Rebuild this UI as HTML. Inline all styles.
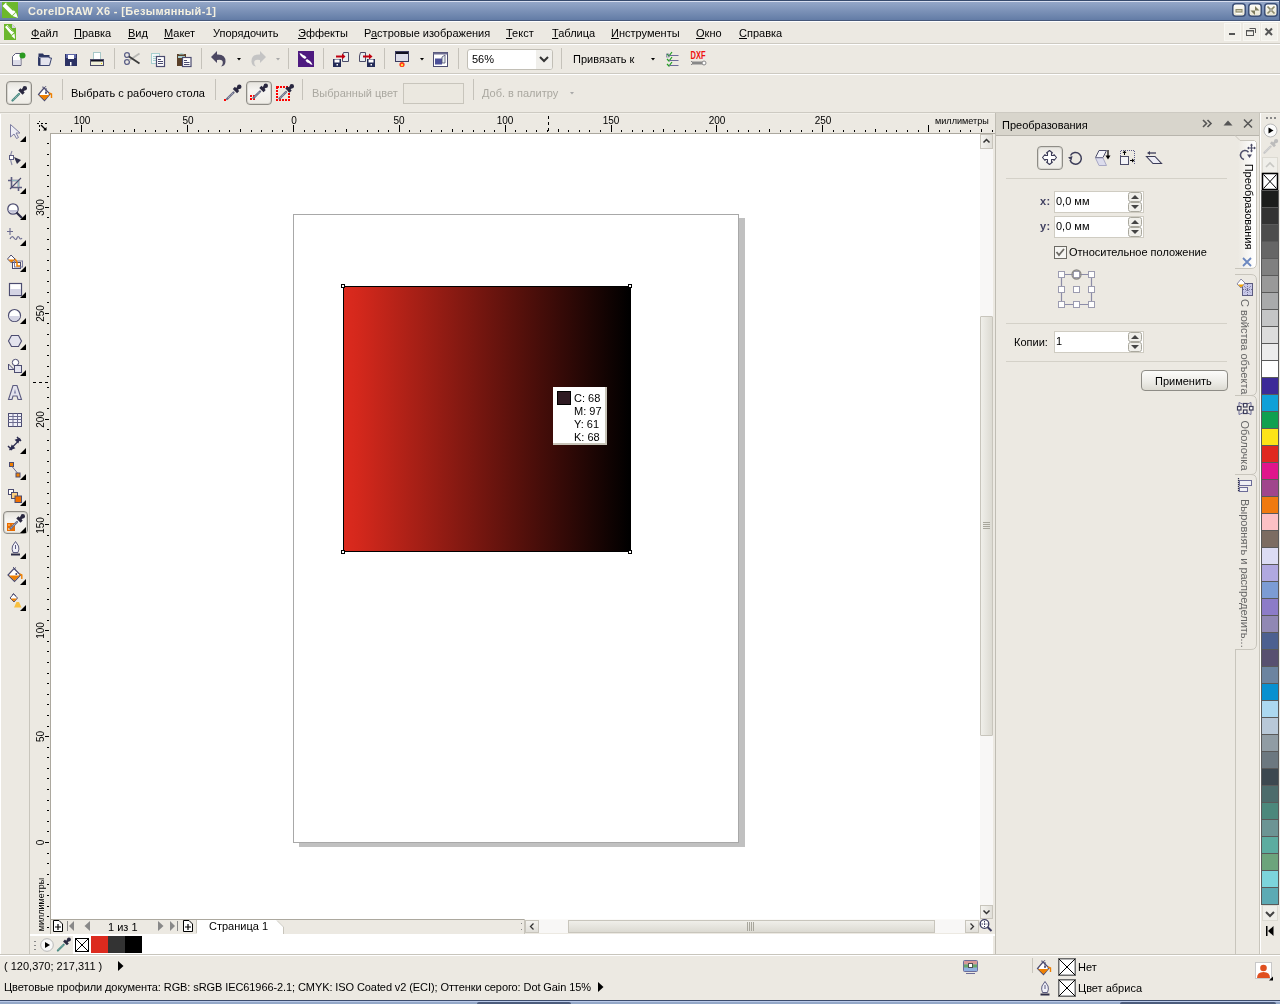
<!DOCTYPE html><html><head><meta charset="utf-8"><style>
*{box-sizing:border-box}
html,body{margin:0;padding:0;width:1280px;height:1004px;overflow:hidden;background:#ECE9E2;font-family:"Liberation Sans",sans-serif;font-size:11px;color:#000}
.a{position:absolute}
.t{position:absolute;white-space:nowrap;line-height:13px;will-change:transform}
svg{position:absolute;overflow:visible}
.g{color:#a8a69c}
</style></head><body>
<div class="a" style="left:0px;top:0px;width:1280px;height:21px;background:linear-gradient(#364a6c 0,#364a6c 1px,#d8dff0 1px,#d8dff0 2px,#94a7c8 2px,#637ca6 20px,#46587a 20px)"></div>
<div class="a" style="left:0px;top:21px;width:1280px;height:1px;background:#fff"></div>
<svg style="left:2px;top:2px" width="16" height="16" viewBox="0 0 16 16"><rect x="0" y="0" width="16" height="16" fill="#6cb82c"/><path d="M0.5 4 L4 0.5 L13.5 10 L10 13.5 Z" fill="#fff"/><path d="M4.5 1.5 L11.5 8.5" stroke="#6cb82c" stroke-width="1.2"/><path d="M10.5 14 L14 10.5 L16 16 Z" fill="#fff"/></svg>
<div class="t" style="left:28px;top:5px;font-weight:bold;font-size:11px;letter-spacing:0.35px;color:#f4f0e0;line-height:13px">CorelDRAW X6 - [Безымянный-1]</div>
<div class="a" style="left:1279px;top:0px;width:1px;height:21px;background:#3c5078"></div>
<svg style="left:1232px;top:3px" width="14" height="14" viewBox="0 0 14 14"><defs><linearGradient id="tb" x1="0" y1="0" x2="0" y2="1"><stop offset="0" stop-color="#fefefa"/><stop offset="1" stop-color="#e8e4d0"/></linearGradient></defs><rect x="0.75" y="0.75" width="12.5" height="12.5" rx="3" fill="url(#tb)" stroke="#3c5078" stroke-width="1.5"/><rect x="4" y="6.5" width="6" height="2.5" fill="#d0ccb4" stroke="#8c8a6c"/><path d="M4 10.5 H10" stroke="#fff"/></svg>
<svg style="left:1248px;top:3px" width="14" height="14" viewBox="0 0 14 14"><defs><linearGradient id="tb" x1="0" y1="0" x2="0" y2="1"><stop offset="0" stop-color="#fefefa"/><stop offset="1" stop-color="#e8e4d0"/></linearGradient></defs><rect x="0.75" y="0.75" width="12.5" height="12.5" rx="3" fill="url(#tb)" stroke="#3c5078" stroke-width="1.5"/><path d="M7 3 L7 7.5 L11.5 7.5 Z M2.5 7.5 L7 7.5 L7 12 Z" fill="#7c7a5c"/></svg>
<svg style="left:1264px;top:3px" width="14" height="14" viewBox="0 0 14 14"><defs><linearGradient id="tb" x1="0" y1="0" x2="0" y2="1"><stop offset="0" stop-color="#fefefa"/><stop offset="1" stop-color="#e8e4d0"/></linearGradient></defs><rect x="0.75" y="0.75" width="12.5" height="12.5" rx="3" fill="url(#tb)" stroke="#3c5078" stroke-width="1.5"/><path d="M3.5 3.5 L10.5 10.5 M10.5 3.5 L3.5 10.5" stroke="#8c8a6c" stroke-width="1.7"/><circle cx="7" cy="7" r="1.3" fill="#a8a8a0"/></svg>
<div class="a" style="left:0px;top:43px;width:1280px;height:1px;background:#cdcac2"></div>
<div class="a" style="left:0px;top:44px;width:1280px;height:1px;background:#fff"></div>
<div class="a" style="left:0px;top:73px;width:1280px;height:1px;background:#cdcac2"></div>
<div class="a" style="left:0px;top:74px;width:1280px;height:1px;background:#fff"></div>
<div class="a" style="left:0px;top:112px;width:1280px;height:1px;background:#cdcac2"></div>
<div class="a" style="left:0px;top:113px;width:1280px;height:1px;background:#f2f0ea"></div>
<svg style="left:4px;top:24px" width="12" height="16" viewBox="0 0 12 16"><path d="M0 0 H8 L12 4 V16 H0 Z" fill="#6cb82c"/><path d="M8 0 L12 4 H8 Z" fill="#d8d0e8"/><path d="M1 3 L3.5 1 L10 8.5 L7.5 11 Z" fill="#fff"/><path d="M3.5 2 L8.5 7.5" stroke="#6cb82c" stroke-width="1"/><path d="M7.5 12 L10.5 9.5 L11 15 Z" fill="#fff"/></svg>
<div class="t" style="left:31px;top:27px;"><u>Ф</u>айл</div>
<div class="t" style="left:74px;top:27px;"><u>П</u>равка</div>
<div class="t" style="left:128px;top:27px;"><u>В</u>ид</div>
<div class="t" style="left:164px;top:27px;"><u>М</u>акет</div>
<div class="t" style="left:213px;top:27px;">Упоря<u>д</u>очить</div>
<div class="t" style="left:298px;top:27px;"><u>Э</u>ффекты</div>
<div class="t" style="left:364px;top:27px;">Р<u>а</u>стровые изображения</div>
<div class="t" style="left:506px;top:27px;"><u>Т</u>екст</div>
<div class="t" style="left:552px;top:27px;"><u>Т</u>аблица</div>
<div class="t" style="left:611px;top:27px;"><u>И</u>нструменты</div>
<div class="t" style="left:696px;top:27px;"><u>О</u>кно</div>
<div class="t" style="left:739px;top:27px;"><u>С</u>правка</div>
<svg style="left:1224px;top:23px" width="17" height="18" viewBox="0 0 17 18"><rect x="0.5" y="0.5" width="16" height="17" fill="#f2f0ea" stroke="#f8f7f2"/><rect x="5" y="10" width="6" height="2" fill="#555"/></svg>
<svg style="left:1243px;top:23px" width="17" height="18" viewBox="0 0 17 18"><rect x="0.5" y="0.5" width="16" height="17" fill="#f2f0ea" stroke="#f8f7f2"/><rect x="3.5" y="7.5" width="7" height="5" fill="none" stroke="#555"/><path d="M6.5 5.5 L12.5 5.5 L12.5 10" fill="none" stroke="#555"/><rect x="3" y="7" width="8" height="1.5" fill="#555"/></svg>
<svg style="left:1261px;top:23px" width="17" height="18" viewBox="0 0 17 18"><rect x="0.5" y="0.5" width="16" height="17" fill="#f2f0ea" stroke="#f8f7f2"/><path d="M4.5 5.5 L11 12 M11 5.5 L4.5 12" stroke="#555" stroke-width="2"/></svg>
<div class="a" style="left:114px;top:48px;width:1px;height:21px;background:#c5c2ba"></div>
<div class="a" style="left:201px;top:48px;width:1px;height:21px;background:#c5c2ba"></div>
<div class="a" style="left:288px;top:48px;width:1px;height:21px;background:#c5c2ba"></div>
<div class="a" style="left:323px;top:48px;width:1px;height:21px;background:#c5c2ba"></div>
<div class="a" style="left:384px;top:48px;width:1px;height:21px;background:#c5c2ba"></div>
<div class="a" style="left:458px;top:48px;width:1px;height:21px;background:#c5c2ba"></div>
<div class="a" style="left:561px;top:48px;width:1px;height:21px;background:#c5c2ba"></div>
<svg style="left:12px;top:52px" width="14" height="14" viewBox="0 0 14 14"><path d="M3.5 1.5 L9 1.5 L9 13.5 L0.5 13.5 L0.5 4.5 Z" fill="#fff" stroke="#5c5c78"/><rect x="1" y="8" width="7.5" height="5" fill="#dcdce8"/><circle cx="10.5" cy="3.5" r="3" fill="#2a9a20"/></svg>
<svg style="left:38px;top:53px" width="14" height="13" viewBox="0 0 14 13"><path d="M0.5 0.5 L5 0.5 L6 2 L11.5 2 L11.5 5 L0.5 5 Z" fill="#2a3460"/><path d="M0.5 4 L11 4 L11.5 5 L13.5 5 L11.5 12.5 L0.5 12.5 Z" fill="#e4e4ee" stroke="#3a4470"/><rect x="0.5" y="5" width="2" height="7" fill="#2a3460"/></svg>
<svg style="left:65px;top:54px" width="12" height="12" viewBox="0 0 12 12"><rect x="0" y="0" width="12" height="12" fill="#2c3264"/><rect x="1" y="0" width="10" height="4" fill="#6068a8"/><rect x="3" y="1" width="6" height="4" fill="#fff"/><rect x="5" y="8" width="1.5" height="3.5" fill="#fff"/></svg>
<svg style="left:90px;top:52px" width="14" height="14" viewBox="0 0 14 14"><rect x="3.5" y="0.5" width="7" height="7" fill="#fff" stroke="#a8c8c8"/><rect x="0.5" y="7.5" width="13" height="6" fill="#f0f0d8" stroke="#4c4c68"/><rect x="1" y="8" width="12" height="1.5" fill="#101020"/><rect x="11" y="11" width="1" height="1" fill="#e0c000"/></svg>
<svg style="left:124px;top:52px" width="16" height="13" viewBox="0 0 16 13"><circle cx="3" cy="3" r="2.4" fill="none" stroke="#5c6088" stroke-width="1.3"/><circle cx="3" cy="10" r="2.4" fill="none" stroke="#5c6088" stroke-width="1.3"/><path d="M5 8.5 L15.5 1.5" stroke="#b8b8b4" stroke-width="1.8"/><path d="M5 4.5 L15.5 11.5" stroke="#3c3c3c" stroke-width="1.8"/></svg>
<svg style="left:151px;top:53px" width="15" height="14" viewBox="0 0 15 14"><rect x="0.5" y="0.5" width="8" height="10" fill="#f4f8f8" stroke="#a8d0d0"/><path d="M2 3.5 H6 M2 5.5 H5 M2 7.5 H5" stroke="#a8d0d0"/><rect x="5.5" y="3.5" width="8" height="10" fill="#fff" stroke="#4c4c70" stroke-width="1.2"/><path d="M7 6.5 H10 M7 8.5 H12 M7 10.5 H12" stroke="#4c4c70"/></svg>
<svg style="left:177px;top:52px" width="15" height="15" viewBox="0 0 15 15"><rect x="0" y="2" width="9" height="12" fill="#5a4028"/><path d="M1.5 2.5 Q4.5 -0.5 7.5 2.5" fill="#a8d0d0"/><rect x="1" y="4" width="7" height="2" fill="#a8d0d0"/><rect x="5.5" y="5.5" width="8.5" height="9" fill="#fff" stroke="#4c4c70" stroke-width="1.2"/><path d="M7 8.5 H10 M7 10.5 H12.5 M7 12.5 H12.5" stroke="#4c4c70"/></svg>
<svg style="left:211px;top:51px" width="16" height="16" viewBox="0 0 16 16"><path d="M0 6 L6 0 L6 3.5 Q15 3 14.5 11 Q14 15 10 15.5 Q12.5 13 11.5 10 Q10 8 6 9 L6 12 Z" fill="#4c4862"/></svg>
<svg style="left:237px;top:58px" width="4" height="3" viewBox="0 0 4 3"><path d="M0 0 H4 L2 2.5 Z" fill="#000"/></svg>
<svg style="left:250px;top:51px" width="16" height="16" viewBox="0 0 16 16"><path d="M16 6 L10 0 L10 3.5 Q1 3 1.5 11 Q2 15 6 15.5 Q3.5 13 4.5 10 Q6 8 10 9 L10 12 Z" fill="#c4c4c4"/></svg>
<svg style="left:276px;top:58px" width="4" height="3" viewBox="0 0 4 3"><path d="M0 0 H4 L2 2.5 Z" fill="#a8a8a8"/></svg>
<svg style="left:298px;top:51px" width="16" height="16" viewBox="0 0 16 16"><rect x="0" y="0" width="16" height="16" fill="#4e1a80"/><path d="M1.5 2 Q4 2.5 5 4 Q7 4 8.5 6.5 L7 8 Q5 7 3.5 5.5 Q2 4 1.5 2 Z M14.5 14 Q12 13.5 11 12 Q9 12 7.5 9.5 L9 8 Q11 9 12.5 10.5 Q14 12 14.5 14 Z" fill="#fff"/></svg>
<svg style="left:333px;top:52px" width="16" height="15" viewBox="0 0 16 15"><path d="M10.5 0.5 L15.5 0.5 L15.5 9.5 L9.5 9.5 L9.5 4 Z" fill="#e8eef0" stroke="#4c4c68"/><path d="M3 4.5 L10 4.5" stroke="#c00010" stroke-width="2"/><path d="M9 1.5 L12.5 4.5 L9 7.5 Z" fill="#c00010"/><rect x="0" y="7" width="8" height="8" fill="#242c58"/><rect x="1.5" y="7.5" width="5" height="3" fill="#fff"/><rect x="3.5" y="12" width="1.5" height="1.5" fill="#fff"/></svg>
<svg style="left:359px;top:52px" width="16" height="15" viewBox="0 0 16 15"><path d="M1.5 0.5 L6.5 0.5 L6.5 9.5 L0.5 9.5 L0.5 4 Z" fill="#e8eef0" stroke="#4c4c68"/><path d="M4 4.5 L11 4.5" stroke="#c00010" stroke-width="2"/><path d="M10 1.5 L13.5 4.5 L10 7.5 Z" fill="#c00010"/><rect x="8" y="7" width="8" height="8" fill="#242c58"/><rect x="9.5" y="7.5" width="5" height="3" fill="#fff"/><rect x="11.5" y="12" width="1.5" height="1.5" fill="#fff"/></svg>
<svg style="left:395px;top:51px" width="14" height="17" viewBox="0 0 14 17"><rect x="0.5" y="0.5" width="13" height="10" fill="#dcdce8" stroke="#3c3c60"/><rect x="1" y="1" width="12" height="2" fill="#101020"/><circle cx="7" cy="13.5" r="2.6" fill="#ff3818"/><circle cx="7" cy="14" r="1.2" fill="#ffe040"/></svg>
<svg style="left:420px;top:58px" width="4" height="3" viewBox="0 0 4 3"><path d="M0 0 H4 L2 2.5 Z" fill="#000"/></svg>
<svg style="left:433px;top:52px" width="15" height="15" viewBox="0 0 15 15"><rect x="0.5" y="0.5" width="14" height="14" fill="#fff" stroke="#4c4c70"/><rect x="0.5" y="0.5" width="14" height="2" fill="#6c6c90"/><rect x="2" y="6.5" width="7" height="6" fill="#4c5098"/><path d="M9 5 L12 3 L12 11 L9 11 Z" fill="#e8f0f0" stroke="#4c4c70" stroke-width="0.8"/></svg>
<div class="a" style="left:467px;top:49px;width:86px;height:21px;border:1px solid #c2bfb6;border-radius:3px;background:#fff"></div>
<div class="a" style="left:536px;top:50px;width:16px;height:19px;background:#f0efeb;border-radius:0 2px 2px 0"></div>
<svg style="left:539px;top:56px" width="10" height="7" viewBox="0 0 10 7"><path d="M1 1 L5 5 L9 1" fill="none" stroke="#333" stroke-width="2"/></svg>
<div class="t" style="left:472px;top:53px;">56%</div>
<div class="t" style="left:573px;top:53px;">Привязать к</div>
<svg style="left:651px;top:58px" width="4" height="3" viewBox="0 0 4 3"><path d="M0 0 H4 L2 2.5 Z" fill="#000"/></svg>
<svg style="left:666px;top:51px" width="13" height="16" viewBox="0 0 13 16"><path d="M1 3 L3 5 L6 1 M1 8 L3 10 L6 6 M1 13 L3 15 L6 11" fill="none" stroke="#20a020" stroke-width="1.2"/><path d="M3 4.5 H12.5 M3 9.5 H12.5 M3 14.5 H12.5" stroke="#6c6c98" stroke-width="1"/><rect x="0.5" y="3" width="2.5" height="3" fill="none" stroke="#6c6c98" stroke-width="0.6"/></svg>
<svg style="left:690px;top:51px" width="17" height="16" viewBox="0 0 17 16"><text x="0.5" y="8" font-family="Liberation Sans" font-weight="bold" font-size="10" fill="#ee1010" textLength="15" lengthAdjust="spacingAndGlyphs">DXF</text><rect x="2" y="10.5" width="12" height="3" fill="#888"/><circle cx="14" cy="12" r="2" fill="#fff" stroke="#888"/><path d="M1 10.5 L2 10.5 M1 13.5 L2 13.5" stroke="#888"/></svg>
<div class="a" style="left:6px;top:81px;width:26px;height:24px;border:1px solid #8e8c86;border-radius:4px;background:linear-gradient(#e6e4de,#f6f5f2 40%,#eeece6);box-shadow:inset 0 0 0 1px #d8d6d0"></div>
<svg style="left:11px;top:86px" width="16" height="16" viewBox="0 0 16 16"><path d="M1.5 14.5 L8 8" stroke="#4c8c84" stroke-width="2.3" stroke-linecap="round"/><path d="M2.5 13.5 L7.5 8.5" stroke="#d8e8e8" stroke-width="0.7" stroke-dasharray="1 1"/><path d="M9.4 2.3 L13.7 6.6 L11.6 8.7 L7.3 4.4 Z" fill="#2a2840"/><path d="M11 5 L13.5 2.5" stroke="#2a2840" stroke-width="2.6"/><circle cx="13.8" cy="2.2" r="2.2" fill="#2a2840"/></svg>
<svg style="left:37px;top:86px" width="16" height="16" viewBox="0 0 16 16"><path d="M7 2 L13 8 L7.5 14.5 L1.5 8.5 Z" fill="#fff" stroke="#4c4c70" stroke-width="1.2"/><path d="M2 9 L12.5 9 L7.5 14 Z" fill="#f08000"/><path d="M5 1 L8 1.5 L9 0" stroke="#4c4c70" stroke-width="0.8" fill="none"/><path d="M12 7 L14.5 8 L14.5 12" fill="none" stroke="#f08000" stroke-width="1.4"/><circle cx="9" cy="7" r="1" fill="#4c4c70"/><path d="M9 7 L9 2" stroke="#4c4c70"/></svg>
<div class="a" style="left:62px;top:79px;width:1px;height:21px;background:#c5c2ba"></div>
<div class="t" style="left:71px;top:87px;">Выбрать с рабочего стола</div>
<div class="a" style="left:215px;top:79px;width:1px;height:21px;background:#c5c2ba"></div>
<svg style="left:224px;top:84px" width="17" height="17" viewBox="0 0 17 17"><rect x="0" y="15" width="2" height="2" fill="#f00"/><g transform="translate(1.5,0.5)"><path d="M1.5 14.5 L8 8" stroke="#6c7088" stroke-width="2.3" stroke-linecap="round"/><path d="M2.5 13.5 L7.5 8.5" stroke="#e0e0f0" stroke-width="0.7" stroke-dasharray="1 1"/><path d="M9.4 2.3 L13.7 6.6 L11.6 8.7 L7.3 4.4 Z" fill="#2a2840"/><path d="M11 5 L13.5 2.5" stroke="#2a2840" stroke-width="2.6"/><circle cx="13.8" cy="2.2" r="2.2" fill="#2a2840"/></g></svg>
<div class="a" style="left:246px;top:81px;width:26px;height:24px;border:1px solid #8e8c86;border-radius:4px;background:linear-gradient(#e6e4de,#f6f5f2 40%,#eeece6);box-shadow:inset 0 0 0 1px #d8d6d0"></div>
<svg style="left:250px;top:84px" width="17" height="17" viewBox="0 0 17 17"><rect x="0" y="11" width="2" height="2" fill="#f00"/><rect x="3" y="11" width="2" height="2" fill="#f00"/><rect x="0" y="14" width="2" height="2" fill="#f00"/><rect x="3" y="14" width="2" height="2" fill="#f00"/><g transform="translate(2,-0.5)"><path d="M1.5 14.5 L8 8" stroke="#6c7088" stroke-width="2.3" stroke-linecap="round"/><path d="M2.5 13.5 L7.5 8.5" stroke="#e0e0f0" stroke-width="0.7" stroke-dasharray="1 1"/><path d="M9.4 2.3 L13.7 6.6 L11.6 8.7 L7.3 4.4 Z" fill="#2a2840"/><path d="M11 5 L13.5 2.5" stroke="#2a2840" stroke-width="2.6"/><circle cx="13.8" cy="2.2" r="2.2" fill="#2a2840"/></g></svg>
<svg style="left:276px;top:86px" width="17" height="16" viewBox="0 0 17 16"><path d="M1 1 H13 V14 H1 Z" fill="none" stroke="#f00" stroke-width="2" stroke-dasharray="2 1"/><g transform="translate(2,-2)"><path d="M1.5 14.5 L8 8" stroke="#6c7088" stroke-width="2.3" stroke-linecap="round"/><path d="M2.5 13.5 L7.5 8.5" stroke="#e0e0f0" stroke-width="0.7" stroke-dasharray="1 1"/><path d="M9.4 2.3 L13.7 6.6 L11.6 8.7 L7.3 4.4 Z" fill="#2a2840"/><path d="M11 5 L13.5 2.5" stroke="#2a2840" stroke-width="2.6"/><circle cx="13.8" cy="2.2" r="2.2" fill="#2a2840"/></g></svg>
<div class="a" style="left:302px;top:79px;width:1px;height:21px;background:#c5c2ba"></div>
<div class="t" style="left:312px;top:87px;color:#aaa8a0">Выбранный цвет</div>
<div class="a" style="left:403px;top:83px;width:61px;height:21px;border:1px solid #c8c5bc;background:#ebe8e0"></div>
<div class="a" style="left:473px;top:79px;width:1px;height:21px;background:#c5c2ba"></div>
<div class="t" style="left:482px;top:87px;color:#aaa8a0">Доб. в палитру</div>
<svg style="left:570px;top:92px" width="4" height="3" viewBox="0 0 4 3"><path d="M0 0 H4 L2 2.5 Z" fill="#a8a8a8"/></svg>
<div class="a" style="left:0px;top:114px;width:1px;height:841px;background:#fff"></div>
<div class="a" style="left:29px;top:114px;width:1px;height:841px;background:#c8c5bc"></div>
<svg style="left:10px;top:124px" width="11" height="15" viewBox="0 0 11 15"><path d="M0.5 0.5 L10 9 L6 9 L8.5 13.5 L6.5 14.5 L4 10 L0.5 13 Z" fill="#eeeef4" stroke="#7c7ca0"/></svg>
<svg style="left:20px;top:136px" width="6" height="6" viewBox="0 0 6 6"><path d="M6 0 L6 6 L0 6 Z" fill="#000"/></svg>
<svg style="left:8px;top:150px" width="14" height="16" viewBox="0 0 14 16"><path d="M4 1 Q1 7 4 15" fill="none" stroke="#8c8ca8" stroke-width="1.2"/><rect x="1.5" y="5.5" width="4" height="4" fill="#fff" stroke="#5c5c80"/><path d="M6 7 L13 10 L9 14 Z" fill="#2c2c48"/></svg>
<svg style="left:20px;top:162px" width="6" height="6" viewBox="0 0 6 6"><path d="M6 0 L6 6 L0 6 Z" fill="#000"/></svg>
<svg style="left:8px;top:177px" width="14" height="14" viewBox="0 0 14 14"><path d="M3.5 0 V10.5 H14" fill="none" stroke="#5c5c80" stroke-width="1.6"/><path d="M0 3.5 H10.5 V14" fill="none" stroke="#5c5c80" stroke-width="1.6"/><path d="M4 3.5 H10 M10.5 4 V10" stroke="#9cd0d0" stroke-width="0.8"/><path d="M2 12 L13 1" stroke="#4c4c70" stroke-width="1.1"/></svg>
<svg style="left:20px;top:188px" width="6" height="6" viewBox="0 0 6 6"><path d="M6 0 L6 6 L0 6 Z" fill="#000"/></svg>
<svg style="left:7px;top:203px" width="16" height="17" viewBox="0 0 16 17"><circle cx="6" cy="6" r="5.2" fill="#fff" stroke="#4c4c70" stroke-width="1.3"/><path d="M1.5 7 H10.5 V8 Q6 12 1.5 8 Z" fill="#c4c4d8"/><path d="M9.5 9.5 L15 15" stroke="#2c2c48" stroke-width="2.2"/></svg>
<svg style="left:20px;top:214px" width="6" height="6" viewBox="0 0 6 6"><path d="M6 0 L6 6 L0 6 Z" fill="#000"/></svg>
<svg style="left:7px;top:228px" width="16" height="15" viewBox="0 0 16 15"><path d="M3 0 V7 M0 3.5 H6" stroke="#6c6c90" stroke-width="1.1"/><path d="M3 11 Q5 7 7 10 Q9 13 10 10 Q11 7 12.5 10 Q13.5 12 15 10" fill="none" stroke="#6c6c90" stroke-width="1.2"/></svg>
<svg style="left:20px;top:240px" width="6" height="6" viewBox="0 0 6 6"><path d="M6 0 L6 6 L0 6 Z" fill="#000"/></svg>
<svg style="left:7px;top:254px" width="16" height="16" viewBox="0 0 16 16"><path d="M4 1 L8 5 L4.5 9 L0.5 5 Z" fill="#fff" stroke="#4c4c70"/><path d="M1 5.5 L7.5 5.5 L4.5 8.5 Z" fill="#f08000"/><rect x="5.5" y="8.5" width="8" height="6" fill="#fff" stroke="#4c4c70"/><rect x="7.5" y="7" width="8" height="6" fill="none" stroke="#7c7ca0"/><path d="M8 5 L10 8 L10 12 L13 12" fill="none" stroke="#f08000" stroke-width="1.5"/></svg>
<svg style="left:20px;top:266px" width="6" height="6" viewBox="0 0 6 6"><path d="M6 0 L6 6 L0 6 Z" fill="#000"/></svg>
<svg style="left:9px;top:283px" width="13" height="13" viewBox="0 0 13 13"><rect x="0.5" y="0.5" width="12" height="12" fill="#fff" stroke="#4c4c70" stroke-width="1.2"/><rect x="1" y="6" width="11" height="6" fill="#d4d4e4"/></svg>
<svg style="left:20px;top:292px" width="6" height="6" viewBox="0 0 6 6"><path d="M6 0 L6 6 L0 6 Z" fill="#000"/></svg>
<svg style="left:8px;top:309px" width="13" height="13" viewBox="0 0 13 13"><circle cx="6.5" cy="6.5" r="6" fill="#fff" stroke="#4c4c70" stroke-width="1.2"/><path d="M0.8 7 H12.2 Q11 12 6.5 12.2 Q2 12 0.8 7 Z" fill="#d4d4e4"/></svg>
<svg style="left:20px;top:318px" width="6" height="6" viewBox="0 0 6 6"><path d="M6 0 L6 6 L0 6 Z" fill="#000"/></svg>
<svg style="left:8px;top:335px" width="14" height="12" viewBox="0 0 14 12"><path d="M3.5 0.5 H10.5 L13.5 6 L10.5 11.5 H3.5 L0.5 6 Z" fill="#e4e4ee" stroke="#4c4c70" stroke-width="1.1"/></svg>
<svg style="left:20px;top:344px" width="6" height="6" viewBox="0 0 6 6"><path d="M6 0 L6 6 L0 6 Z" fill="#000"/></svg>
<svg style="left:8px;top:359px" width="14" height="14" viewBox="0 0 14 14"><circle cx="7.5" cy="3.5" r="3.2" fill="#fff" stroke="#4c4c70"/><path d="M0.5 5 L0.5 10.5 L6 10.5 Z" fill="#e4e4ee" stroke="#4c4c70"/><rect x="6.5" y="6.5" width="7" height="7" fill="#e4e4ee" stroke="#4c4c70"/></svg>
<svg style="left:20px;top:370px" width="6" height="6" viewBox="0 0 6 6"><path d="M6 0 L6 6 L0 6 Z" fill="#000"/></svg>
<svg style="left:8px;top:385px" width="14" height="15" viewBox="0 0 14 15"><path d="M5 0.5 H9 L13.5 14.5 H10 L9 11 H5 L4 14.5 H0.5 Z" fill="#e4e4ee" stroke="#5c5c80" stroke-width="1.1"/><path d="M5.8 8.5 H8.2 L7 4 Z" fill="#8c8cb0"/></svg>
<svg style="left:8px;top:413px" width="14" height="14" viewBox="0 0 14 14"><rect x="0.5" y="0.5" width="13" height="13" fill="#f0f0f8" stroke="#4c4c70"/><path d="M0.5 3.5 H13.5 M0.5 6.5 H13.5 M0.5 9.5 H13.5 M5 0.5 V13.5 M9.5 0.5 V13.5" stroke="#6c6c90"/></svg>
<svg style="left:8px;top:437px" width="14" height="14" viewBox="0 0 14 14"><path d="M1.5 13 L12.5 2" stroke="#2c2c50" stroke-width="1.3"/><path d="M0 9 L4 13 M9 0 L13 4 M3 12 L4 9 L6 11 Z M11 2 L10 5 L8 3 Z" stroke="#2c2c50" stroke-width="1.5" fill="#2c2c50"/></svg>
<svg style="left:20px;top:448px" width="6" height="6" viewBox="0 0 6 6"><path d="M6 0 L6 6 L0 6 Z" fill="#000"/></svg>
<svg style="left:9px;top:462px" width="12" height="16" viewBox="0 0 12 16"><rect x="0.5" y="0.5" width="4" height="4" fill="#f08000" stroke="#4c4c70"/><rect x="7" y="11" width="4" height="4" fill="#f08000" stroke="#4c4c70"/><path d="M3 4.5 L8.5 11" stroke="#6c6c90"/></svg>
<svg style="left:20px;top:474px" width="6" height="6" viewBox="0 0 6 6"><path d="M6 0 L6 6 L0 6 Z" fill="#000"/></svg>
<svg style="left:8px;top:489px" width="14" height="14" viewBox="0 0 14 14"><rect x="0.5" y="0.5" width="5" height="5" fill="#fff" stroke="#4c4c70"/><rect x="3.5" y="3.5" width="6" height="6" fill="#fcd080" stroke="#4c4c70"/><rect x="7" y="7" width="6.5" height="6.5" fill="#f07000" stroke="#4c4c70"/></svg>
<svg style="left:20px;top:500px" width="6" height="6" viewBox="0 0 6 6"><path d="M6 0 L6 6 L0 6 Z" fill="#000"/></svg>
<div class="a" style="left:3px;top:511px;width:25px;height:23px;border:1px solid #8e8c86;border-radius:4px;background:linear-gradient(#e6e4de,#f6f5f2 40%,#eeece6);box-shadow:inset 0 0 0 1px #d8d6d0"></div>
<svg style="left:7px;top:515px" width="17" height="17" viewBox="0 0 17 17"><rect x="0" y="8" width="8" height="8" fill="#e86c00"/><rect x="1" y="9" width="2" height="2" fill="#fca040"/><rect x="5" y="9" width="2" height="2" fill="#fca040"/><rect x="3" y="12" width="2" height="2" fill="#fff"/><rect x="1" y="13" width="2" height="2" fill="#f8c080"/><g transform="translate(2,-1)"><path d="M1.5 14.5 L8 8" stroke="#6c7088" stroke-width="2.3" stroke-linecap="round"/><path d="M2.5 13.5 L7.5 8.5" stroke="#e0e0f0" stroke-width="0.7" stroke-dasharray="1 1"/><path d="M9.4 2.3 L13.7 6.6 L11.6 8.7 L7.3 4.4 Z" fill="#2a2840"/><path d="M11 5 L13.5 2.5" stroke="#2a2840" stroke-width="2.6"/><circle cx="13.8" cy="2.2" r="2.2" fill="#2a2840"/></g></svg>
<svg style="left:20px;top:527px" width="6" height="6" viewBox="0 0 6 6"><path d="M6 0 L6 6 L0 6 Z" fill="#000"/></svg>
<svg style="left:11px;top:541px" width="9" height="15" viewBox="0 0 9 15"><path d="M4.5 0.5 L7.5 5 Q8.5 8 7 11.5 H2 Q0.5 8 1.5 5 Z" fill="#f0f0f8" stroke="#5c5c80"/><path d="M4.5 4 V8" stroke="#5c5c80"/><rect x="0" y="12.5" width="9" height="2" fill="#2c2c48"/></svg>
<svg style="left:20px;top:553px" width="6" height="6" viewBox="0 0 6 6"><path d="M6 0 L6 6 L0 6 Z" fill="#000"/></svg>
<svg style="left:7px;top:567px" width="16" height="15" viewBox="0 0 16 15"><path d="M7 1.5 L13.5 8 L7.5 14.3 L1 8 Z" fill="#fff" stroke="#4c4c70" stroke-width="1.2"/><path d="M1.8 8.5 L12.7 8.5 L7.5 13.6 Z" fill="#f08000"/><path d="M6 0 L8.5 2.5 M9 0.5 L7 2" stroke="#4c4c70" stroke-width="0.9"/><path d="M12.5 7 L14.8 8 L14.8 12" fill="none" stroke="#f08000" stroke-width="1.4"/><circle cx="9.3" cy="7" r="1" fill="#4c4c70"/></svg>
<svg style="left:20px;top:579px" width="6" height="6" viewBox="0 0 6 6"><path d="M6 0 L6 6 L0 6 Z" fill="#000"/></svg>
<svg style="left:9px;top:593px" width="13" height="15" viewBox="0 0 13 15"><path d="M4.5 1 L8.5 5 L5 9 L1 5 Z" fill="#fff" stroke="#4c4c70"/><path d="M1.5 5.5 L8 5.5 L5 8.5 Z" fill="#f08000"/><path d="M3 2 L5 0 M5 1 L7 3" stroke="#4c4c70" stroke-width="0.8"/><path d="M5 14.5 L7.5 9 H10 L12.5 14.5 Z" fill="#f8c040"/></svg>
<svg style="left:20px;top:605px" width="6" height="6" viewBox="0 0 6 6"><path d="M6 0 L6 6 L0 6 Z" fill="#000"/></svg>
<svg style="left:36px;top:120px" width="12" height="12" viewBox="0 0 12 12"><g fill="#000" shape-rendering="crispEdges"><rect x="1" y="3" width="2" height="1"/><rect x="5" y="3" width="2" height="1"/><rect x="9" y="3" width="2" height="1"/><rect x="3" y="1" width="1" height="1"/><rect x="3" y="5" width="1" height="2"/><rect x="3" y="9" width="1" height="2"/></g><path d="M5 5 L10 10" stroke="#000" stroke-width="1.2"/><path d="M10.5 10.5 L7 10.5 L10.5 7 Z" fill="#000"/></svg>
<div class="a" style="left:50px;top:133px;width:945px;height:1px;background:#aca89e"></div>
<svg style="left:0;top:0" width="1280" height="1004" viewBox="0 0 1280 1004" shape-rendering="crispEdges"><g fill="#000"><rect x="60" y="130" width="1" height="2"/><rect x="71" y="130" width="1" height="2"/><rect x="81" y="125" width="1" height="7"/><rect x="92" y="130" width="1" height="2"/><rect x="102" y="130" width="1" height="2"/><rect x="113" y="130" width="1" height="2"/><rect x="124" y="130" width="1" height="2"/><rect x="134" y="129" width="1" height="3"/><rect x="145" y="130" width="1" height="2"/><rect x="155" y="130" width="1" height="2"/><rect x="166" y="130" width="1" height="2"/><rect x="177" y="130" width="1" height="2"/><rect x="187" y="125" width="1" height="7"/><rect x="198" y="130" width="1" height="2"/><rect x="208" y="130" width="1" height="2"/><rect x="219" y="130" width="1" height="2"/><rect x="229" y="130" width="1" height="2"/><rect x="240" y="129" width="1" height="3"/><rect x="251" y="130" width="1" height="2"/><rect x="261" y="130" width="1" height="2"/><rect x="272" y="130" width="1" height="2"/><rect x="282" y="130" width="1" height="2"/><rect x="293" y="125" width="1" height="7"/><rect x="304" y="130" width="1" height="2"/><rect x="314" y="130" width="1" height="2"/><rect x="325" y="130" width="1" height="2"/><rect x="335" y="130" width="1" height="2"/><rect x="346" y="129" width="1" height="3"/><rect x="357" y="130" width="1" height="2"/><rect x="367" y="130" width="1" height="2"/><rect x="378" y="130" width="1" height="2"/><rect x="388" y="130" width="1" height="2"/><rect x="399" y="125" width="1" height="7"/><rect x="409" y="130" width="1" height="2"/><rect x="420" y="130" width="1" height="2"/><rect x="431" y="130" width="1" height="2"/><rect x="441" y="130" width="1" height="2"/><rect x="452" y="129" width="1" height="3"/><rect x="462" y="130" width="1" height="2"/><rect x="473" y="130" width="1" height="2"/><rect x="484" y="130" width="1" height="2"/><rect x="494" y="130" width="1" height="2"/><rect x="505" y="125" width="1" height="7"/><rect x="515" y="130" width="1" height="2"/><rect x="526" y="130" width="1" height="2"/><rect x="536" y="130" width="1" height="2"/><rect x="547" y="130" width="1" height="2"/><rect x="558" y="129" width="1" height="3"/><rect x="568" y="130" width="1" height="2"/><rect x="579" y="130" width="1" height="2"/><rect x="589" y="130" width="1" height="2"/><rect x="600" y="130" width="1" height="2"/><rect x="611" y="125" width="1" height="7"/><rect x="621" y="130" width="1" height="2"/><rect x="632" y="130" width="1" height="2"/><rect x="642" y="130" width="1" height="2"/><rect x="653" y="130" width="1" height="2"/><rect x="663" y="129" width="1" height="3"/><rect x="674" y="130" width="1" height="2"/><rect x="685" y="130" width="1" height="2"/><rect x="695" y="130" width="1" height="2"/><rect x="706" y="130" width="1" height="2"/><rect x="716" y="125" width="1" height="7"/><rect x="727" y="130" width="1" height="2"/><rect x="738" y="130" width="1" height="2"/><rect x="748" y="130" width="1" height="2"/><rect x="759" y="130" width="1" height="2"/><rect x="769" y="129" width="1" height="3"/><rect x="780" y="130" width="1" height="2"/><rect x="790" y="130" width="1" height="2"/><rect x="801" y="130" width="1" height="2"/><rect x="812" y="130" width="1" height="2"/><rect x="822" y="125" width="1" height="7"/><rect x="833" y="130" width="1" height="2"/><rect x="843" y="130" width="1" height="2"/><rect x="854" y="130" width="1" height="2"/><rect x="865" y="130" width="1" height="2"/><rect x="875" y="129" width="1" height="3"/><rect x="886" y="130" width="1" height="2"/><rect x="896" y="130" width="1" height="2"/><rect x="907" y="130" width="1" height="2"/><rect x="918" y="130" width="1" height="2"/><rect x="928" y="125" width="1" height="7"/><rect x="939" y="130" width="1" height="2"/><rect x="949" y="130" width="1" height="2"/><rect x="960" y="130" width="1" height="2"/><rect x="970" y="130" width="1" height="2"/><rect x="981" y="129" width="1" height="3"/><rect x="992" y="130" width="1" height="2"/></g></svg>
<div class="t" style="left:61.8px;top:115px;width:40px;text-align:center;font-size:10px;line-height:11px">100</div>
<div class="t" style="left:167.7px;top:115px;width:40px;text-align:center;font-size:10px;line-height:11px">50</div>
<div class="t" style="left:273.5px;top:115px;width:40px;text-align:center;font-size:10px;line-height:11px">0</div>
<div class="t" style="left:379.4px;top:115px;width:40px;text-align:center;font-size:10px;line-height:11px">50</div>
<div class="t" style="left:485.2px;top:115px;width:40px;text-align:center;font-size:10px;line-height:11px">100</div>
<div class="t" style="left:591.0px;top:115px;width:40px;text-align:center;font-size:10px;line-height:11px">150</div>
<div class="t" style="left:696.9px;top:115px;width:40px;text-align:center;font-size:10px;line-height:11px">200</div>
<div class="t" style="left:802.8px;top:115px;width:40px;text-align:center;font-size:10px;line-height:11px">250</div>
<div class="t" style="left:935px;top:115.5px;font-size:9.1px;line-height:11px">миллиметры</div>
<svg style="left:548px;top:116px" width="1" height="15" viewBox="0 0 1 15"><path d="M0.5 0 V15" stroke="#000" stroke-dasharray="3 3"/></svg>
<div class="a" style="left:50px;top:134px;width:1px;height:800px;background:#aca89e"></div>
<svg style="left:0;top:0" width="1280" height="1004" viewBox="0 0 1280 1004" shape-rendering="crispEdges"><g fill="#000"><rect x="47" y="927" width="2" height="1"/><rect x="47" y="916" width="2" height="1"/><rect x="47" y="906" width="2" height="1"/><rect x="47" y="895" width="2" height="1"/><rect x="47" y="884" width="2" height="1"/><rect x="47" y="874" width="2" height="1"/><rect x="47" y="863" width="2" height="1"/><rect x="47" y="853" width="2" height="1"/><rect x="45" y="842" width="4" height="1"/><rect x="47" y="831" width="2" height="1"/><rect x="47" y="821" width="2" height="1"/><rect x="47" y="810" width="2" height="1"/><rect x="47" y="800" width="2" height="1"/><rect x="47" y="789" width="2" height="1"/><rect x="47" y="778" width="2" height="1"/><rect x="47" y="768" width="2" height="1"/><rect x="47" y="757" width="2" height="1"/><rect x="47" y="747" width="2" height="1"/><rect x="45" y="736" width="4" height="1"/><rect x="47" y="726" width="2" height="1"/><rect x="47" y="715" width="2" height="1"/><rect x="47" y="704" width="2" height="1"/><rect x="47" y="694" width="2" height="1"/><rect x="47" y="683" width="2" height="1"/><rect x="47" y="673" width="2" height="1"/><rect x="47" y="662" width="2" height="1"/><rect x="47" y="651" width="2" height="1"/><rect x="47" y="641" width="2" height="1"/><rect x="45" y="630" width="4" height="1"/><rect x="47" y="620" width="2" height="1"/><rect x="47" y="609" width="2" height="1"/><rect x="47" y="599" width="2" height="1"/><rect x="47" y="588" width="2" height="1"/><rect x="47" y="577" width="2" height="1"/><rect x="47" y="567" width="2" height="1"/><rect x="47" y="556" width="2" height="1"/><rect x="47" y="546" width="2" height="1"/><rect x="47" y="535" width="2" height="1"/><rect x="45" y="524" width="4" height="1"/><rect x="47" y="514" width="2" height="1"/><rect x="47" y="503" width="2" height="1"/><rect x="47" y="493" width="2" height="1"/><rect x="47" y="482" width="2" height="1"/><rect x="47" y="472" width="2" height="1"/><rect x="47" y="461" width="2" height="1"/><rect x="47" y="450" width="2" height="1"/><rect x="47" y="440" width="2" height="1"/><rect x="47" y="429" width="2" height="1"/><rect x="45" y="419" width="4" height="1"/><rect x="47" y="408" width="2" height="1"/><rect x="47" y="397" width="2" height="1"/><rect x="47" y="387" width="2" height="1"/><rect x="47" y="376" width="2" height="1"/><rect x="47" y="366" width="2" height="1"/><rect x="47" y="355" width="2" height="1"/><rect x="47" y="345" width="2" height="1"/><rect x="47" y="334" width="2" height="1"/><rect x="47" y="323" width="2" height="1"/><rect x="45" y="313" width="4" height="1"/><rect x="47" y="302" width="2" height="1"/><rect x="47" y="292" width="2" height="1"/><rect x="47" y="281" width="2" height="1"/><rect x="47" y="270" width="2" height="1"/><rect x="47" y="260" width="2" height="1"/><rect x="47" y="249" width="2" height="1"/><rect x="47" y="239" width="2" height="1"/><rect x="47" y="228" width="2" height="1"/><rect x="47" y="217" width="2" height="1"/><rect x="45" y="207" width="4" height="1"/><rect x="47" y="196" width="2" height="1"/><rect x="47" y="186" width="2" height="1"/><rect x="47" y="175" width="2" height="1"/><rect x="47" y="165" width="2" height="1"/><rect x="47" y="154" width="2" height="1"/><rect x="47" y="143" width="2" height="1"/></g></svg>
<div class="t" style="left:19.5px;top:837.0px;width:40px;height:11px;text-align:center;font-size:10px;line-height:11px;transform:rotate(-90deg);will-change:auto">0</div>
<div class="t" style="left:19.5px;top:731.1px;width:40px;height:11px;text-align:center;font-size:10px;line-height:11px;transform:rotate(-90deg);will-change:auto">50</div>
<div class="t" style="left:19.5px;top:625.3px;width:40px;height:11px;text-align:center;font-size:10px;line-height:11px;transform:rotate(-90deg);will-change:auto">100</div>
<div class="t" style="left:19.5px;top:519.5px;width:40px;height:11px;text-align:center;font-size:10px;line-height:11px;transform:rotate(-90deg);will-change:auto">150</div>
<div class="t" style="left:19.5px;top:413.6px;width:40px;height:11px;text-align:center;font-size:10px;line-height:11px;transform:rotate(-90deg);will-change:auto">200</div>
<div class="t" style="left:19.5px;top:307.8px;width:40px;height:11px;text-align:center;font-size:10px;line-height:11px;transform:rotate(-90deg);will-change:auto">250</div>
<div class="t" style="left:19.5px;top:201.9px;width:40px;height:11px;text-align:center;font-size:10px;line-height:11px;transform:rotate(-90deg);will-change:auto">300</div>
<div class="t" style="left:13px;top:899px;width:56px;height:11px;text-align:center;font-size:9px;line-height:11px;transform:rotate(-90deg);will-change:auto">миллиметры</div>
<svg style="left:33px;top:382px" width="15" height="1" viewBox="0 0 15 1"><path d="M0 0.5 H15" stroke="#000" stroke-dasharray="3 3"/></svg>
<div class="a" style="left:51px;top:134px;width:929px;height:785px;background:#fff"></div>
<div class="a" style="left:739px;top:218px;width:6px;height:629px;background:#c0c0c0"></div>
<div class="a" style="left:299px;top:843px;width:446px;height:4px;background:#c0c0c0"></div>
<div class="a" style="left:293px;top:214px;width:446px;height:629px;background:#fff;border:1px solid #a8a8a8"></div>
<div class="a" style="left:343px;top:286px;width:288px;height:266px;background:linear-gradient(90deg,#dc2a1e 0%,#d4281c 5%,#000 100%);border:1px solid #000"></div>
<div class="a" style="left:341px;top:284px;width:4px;height:4px;background:#fff;border:1px solid #000"></div>
<div class="a" style="left:628px;top:284px;width:4px;height:4px;background:#fff;border:1px solid #000"></div>
<div class="a" style="left:341px;top:550px;width:4px;height:4px;background:#fff;border:1px solid #000"></div>
<div class="a" style="left:628px;top:550px;width:4px;height:4px;background:#fff;border:1px solid #000"></div>
<div class="a" style="left:553px;top:387px;width:54px;height:58px;background:#fff;border-right:2px solid #c8c4b8;border-bottom:2px solid #c8c4b8"></div>
<div class="a" style="left:557px;top:391px;width:14px;height:14px;background:#2e1a22;border:1px solid #000"></div>
<div class="t" style="left:574px;top:392px;font-size:11px">C: 68</div>
<div class="t" style="left:574px;top:405px;font-size:11px">M: 97</div>
<div class="t" style="left:574px;top:418px;font-size:11px">Y: 61</div>
<div class="t" style="left:574px;top:431px;font-size:11px">K: 68</div>
<div class="a" style="left:980px;top:134px;width:13px;height:785px;background:#f8f7f6"></div>
<div class="a" style="left:980px;top:134px;width:13px;height:15px;background:linear-gradient(90deg,#f4f3ef,#e0ded8);border:1px solid #c8c5bc"></div>
<svg style="left:983px;top:139px" width="7" height="4" viewBox="0 0 7 4"><path d="M0.5 3.5 L3.5 0.5 L6.5 3.5" fill="none" stroke="#333" stroke-width="1.5"/></svg>
<div class="a" style="left:980px;top:316px;width:13px;height:420px;background:linear-gradient(90deg,#f0efea,#dcdad2);border:1px solid #c8c5bc;border-radius:1px"></div>
<svg style="left:983px;top:522px" width="7" height="7" viewBox="0 0 7 7"><path d="M0 0.5 H7 M0 2.5 H7 M0 4.5 H7 M0 6.5 H7" stroke="#a8a69c"/></svg>
<div class="a" style="left:980px;top:905px;width:13px;height:14px;background:linear-gradient(90deg,#f4f3ef,#e0ded8);border:1px solid #c8c5bc"></div>
<svg style="left:983px;top:910px" width="7" height="4" viewBox="0 0 7 4"><path d="M0.5 0.5 L3.5 3.5 L6.5 0.5" fill="none" stroke="#333" stroke-width="1.5"/></svg>
<div class="a" style="left:51px;top:919px;width:929px;height:15px;background:#ECE9E2"></div>
<div class="a" style="left:51px;top:919px;width:474px;height:1px;background:#aca89e"></div>
<div class="a" style="left:525px;top:919px;width:455px;height:1px;background:#fbfaf8"></div>
<div class="a" style="left:524px;top:919px;width:1px;height:15px;background:#c8c5bc"></div>
<svg style="left:53px;top:920px" width="10" height="12" viewBox="0 0 10 12"><path d="M0.5 0.5 H6 L9.5 4 V11.5 H0.5 Z" fill="#fff" stroke="#000"/><path d="M5 4 V10 M2 7 H8" stroke="#000" stroke-width="1.2"/></svg>
<svg style="left:67px;top:921px" width="8" height="10" viewBox="0 0 8 10"><rect x="0" y="0" width="1" height="10" fill="#888"/><path d="M7 0 L2 5 L7 10 Z" fill="#888"/></svg>
<svg style="left:84px;top:921px" width="6" height="10" viewBox="0 0 6 10"><path d="M6 0 L0.5 5 L6 10 Z" fill="#888"/></svg>
<div class="t" style="left:108px;top:921px;">1 из 1</div>
<svg style="left:158px;top:921px" width="6" height="10" viewBox="0 0 6 10"><path d="M0 0 L5.5 5 L0 10 Z" fill="#888"/></svg>
<svg style="left:170px;top:921px" width="8" height="10" viewBox="0 0 8 10"><rect x="7" y="0" width="1" height="10" fill="#888"/><path d="M0 0 L5 5 L0 10 Z" fill="#888"/></svg>
<svg style="left:183px;top:920px" width="10" height="12" viewBox="0 0 10 12"><path d="M0.5 0.5 H6 L9.5 4 V11.5 H0.5 Z" fill="#fff" stroke="#000"/><path d="M5 4 V10 M2 7 H8" stroke="#000" stroke-width="1.2"/></svg>
<div class="a" style="left:197px;top:920px;width:1px;height:13px;background:#c8c5bc"></div>
<div class="a" style="left:196px;top:920px;width:1px;height:13px;background:#c8c5bc"></div>
<svg style="left:197px;top:920px" width="88" height="14" viewBox="0 0 88 14"><path d="M0 0 H80 L87 7 V14 H0 Z" fill="#fff"/><path d="M80 0.5 L86.5 7 V14" fill="none" stroke="#c8c5bc"/></svg>
<div class="t" style="left:209px;top:920px;">Страница 1</div>
<svg style="left:520px;top:922px" width="3" height="9" viewBox="0 0 3 9"><rect x="1" y="1" width="1" height="1" fill="#888"/><rect x="1" y="7" width="1" height="1" fill="#888"/></svg>
<div class="a" style="left:525px;top:920px;width:14px;height:13px;background:linear-gradient(#f4f3ef,#e0ded8);border:1px solid #c8c5bc"></div>
<svg style="left:530px;top:923px" width="4" height="7" viewBox="0 0 4 7"><path d="M3.5 0.5 L0.5 3.5 L3.5 6.5" fill="none" stroke="#333" stroke-width="1.3"/></svg>
<div class="a" style="left:539px;top:920px;width:29px;height:13px;background:#f8f7f6"></div>
<div class="a" style="left:568px;top:920px;width:367px;height:13px;background:linear-gradient(#f0efea,#dcdad2);border:1px solid #c8c5bc"></div>
<svg style="left:747px;top:922px" width="7" height="9" viewBox="0 0 7 9"><path d="M0.5 0 V9 M2.5 0 V9 M4.5 0 V9 M6.5 0 V9" stroke="#a8a69c"/></svg>
<div class="a" style="left:935px;top:920px;width:30px;height:13px;background:#f8f7f6"></div>
<div class="a" style="left:965px;top:920px;width:14px;height:13px;background:linear-gradient(#f4f3ef,#e0ded8);border:1px solid #c8c5bc"></div>
<svg style="left:970px;top:923px" width="4" height="7" viewBox="0 0 4 7"><path d="M0.5 0.5 L3.5 3.5 L0.5 6.5" fill="none" stroke="#333" stroke-width="1.3"/></svg>
<svg style="left:979px;top:919px" width="14" height="14" viewBox="0 0 14 14"><circle cx="5.5" cy="5" r="4.3" fill="#fff" stroke="#3c3c60" stroke-width="1.3"/><path d="M5.5 2 V8 M2.5 5 H8.5" stroke="#3c3c60" stroke-width="1" stroke-dasharray="1.5 1"/><path d="M8.5 8 L12.5 12" stroke="#3c3c60" stroke-width="2"/></svg>
<div class="a" style="left:30px;top:934px;width:965px;height:2px;background:#fff"></div>
<div class="a" style="left:30px;top:936px;width:965px;height:18px;background:#ECE9E2"></div>
<div class="a" style="left:73px;top:936px;width:920px;height:18px;background:#fff"></div>
<svg style="left:34px;top:941px" width="3" height="11" viewBox="0 0 3 11"><rect x="0" y="0" width="2" height="1" fill="#888"/><rect x="0" y="4" width="2" height="1" fill="#888"/><rect x="0" y="8" width="2" height="1" fill="#888"/></svg>
<svg style="left:40px;top:938px" width="14" height="14" viewBox="0 0 14 14"><circle cx="7" cy="7" r="6.3" fill="#f8f8f8" stroke="#b8b8b8"/><path d="M5 4 L10 7 L5 10 Z" fill="#000"/></svg>
<svg style="left:57px;top:938px" width="16" height="16" viewBox="0 0 16 16"><g transform="translate(-0.5,-0.5) scale(0.9)"><path d="M1.5 14.5 L8 8" stroke="#4c8c84" stroke-width="2.3" stroke-linecap="round"/><path d="M2.5 13.5 L7.5 8.5" stroke="#d8e8e8" stroke-width="0.7" stroke-dasharray="1 1"/><path d="M9.4 2.3 L13.7 6.6 L11.6 8.7 L7.3 4.4 Z" fill="#2a2840"/><path d="M11 5 L13.5 2.5" stroke="#2a2840" stroke-width="2.6"/><circle cx="13.8" cy="2.2" r="2.2" fill="#2a2840"/></g></svg>
<svg style="left:75px;top:938px" width="14" height="14" viewBox="0 0 14 14"><rect x="0.5" y="0.5" width="13" height="13" fill="#fff" stroke="#000"/><path d="M1 1 L13 13 M13 1 L1 13" stroke="#000"/></svg>
<div class="a" style="left:91px;top:936px;width:17px;height:17px;background:#dc2a1e"></div>
<div class="a" style="left:108px;top:936px;width:17px;height:17px;background:#333333"></div>
<div class="a" style="left:125px;top:936px;width:17px;height:17px;background:#000"></div>
<div class="a" style="left:30px;top:954px;width:965px;height:1px;background:#c8c5bc"></div>
<div class="a" style="left:995px;top:113px;width:1px;height:842px;background:#c0bdb4"></div>
<div class="a" style="left:996px;top:113px;width:263px;height:22px;background:#d8d5cc"></div>
<div class="a" style="left:996px;top:135px;width:263px;height:1px;background:#b8b5ad"></div>
<div class="a" style="left:1259px;top:113px;width:1px;height:23px;background:#c8c5bc"></div>
<div class="t" style="left:1002px;top:119px;">Преобразования</div>
<svg style="left:1202px;top:119px" width="11" height="9" viewBox="0 0 11 9"><path d="M1 1 L4.5 4.5 L1 8 M5.5 1 L9 4.5 L5.5 8" fill="none" stroke="#555" stroke-width="1.6"/></svg>
<svg style="left:1223px;top:120px" width="10" height="6" viewBox="0 0 10 6"><path d="M0.5 5.5 L5 0.5 L9.5 5.5 Z" fill="#555"/></svg>
<svg style="left:1243px;top:119px" width="10" height="9" viewBox="0 0 10 9"><path d="M1 0.5 L9 8.5 M9 0.5 L1 8.5" stroke="#555" stroke-width="1.5"/></svg>
<div class="a" style="left:1037px;top:146px;width:26px;height:24px;border:1px solid #8e8c86;border-radius:4px;background:linear-gradient(#e6e4de,#f6f5f2 40%,#eeece6);box-shadow:inset 0 0 0 1px #d8d6d0"></div>
<svg style="left:1042px;top:150px" width="15" height="15" viewBox="0 0 15 15"><path d="M7.5 0.5 L10.5 3 L9.5 3 L9.5 5.5 L12 5.5 L12 4.5 L14.5 7.5 L12 10.5 L12 9.5 L9.5 9.5 L9.5 12 L10.5 12 L7.5 14.5 L4.5 12 L5.5 12 L5.5 9.5 L3 9.5 L3 10.5 L0.5 7.5 L3 4.5 L3 5.5 L5.5 5.5 L5.5 3 L4.5 3 Z" fill="#fff" stroke="#3c3c58" stroke-width="1.1" stroke-linejoin="round"/></svg>
<svg style="left:1068px;top:151px" width="14" height="14" viewBox="0 0 14 14"><path d="M2.5 4.5 A5.8 5.8 0 1 1 2 9" fill="none" stroke="#3c3c58" stroke-width="1.5"/><path d="M0 6.5 L4.5 5 L3.5 9.5 Z" fill="#3c3c58"/></svg>
<svg style="left:1095px;top:150px" width="16" height="17" viewBox="0 0 16 17"><path d="M4 0.5 H11.5 L8 7.5 H0.5 Z" fill="#f4f4f8" stroke="#4c4c68"/><path d="M0.5 8 H8 L11.5 15.5 H4 Z" fill="#dcdcec" stroke="#a8a8c4"/><path d="M13 0 V8" stroke="#000" stroke-width="1.2"/><path d="M10.5 5.5 H15.5 L13 9.5 Z" fill="#000"/></svg>
<svg style="left:1120px;top:150px" width="16" height="16" viewBox="0 0 16 16"><path d="M1 0.5 H15 M14.5 1 V15" fill="none" stroke="#5c5c88" stroke-dasharray="1 1"/><path d="M0.5 1 V6" stroke="#5c5c88" stroke-dasharray="1 1"/><rect x="0.5" y="6.5" width="8" height="8" fill="#f4f4f8" stroke="#4c4c68"/><path d="M4.5 5 V2" stroke="#000"/><path d="M2.5 3 L4.5 0.5 L6.5 3 Z" fill="#000"/><path d="M10 10.5 H13" stroke="#000"/><path d="M12 8.5 L14.5 10.5 L12 12.5 Z" fill="#000"/></svg>
<svg style="left:1146px;top:151px" width="17" height="14" viewBox="0 0 17 14"><path d="M0.5 5.5 H9 L15.5 12.5 H7 Z" fill="#ececf4" stroke="#3c3c58" stroke-width="1.1"/><path d="M3 2 H10" stroke="#3c3c58" stroke-width="1.3"/><path d="M1 2 L4 0 L4 4 Z" fill="#3c3c58"/></svg>
<div class="a" style="left:1006px;top:178px;width:221px;height:1px;background:#d4d1c8"></div>
<div class="t" style="left:1040px;top:195px;color:#404060;font-weight:bold;letter-spacing:0.5px">x:</div>
<div class="a" style="left:1054px;top:191px;width:90px;height:22px;background:#fff;border:1px solid #cfccc2"></div>
<div class="t" style="left:1056px;top:195px;">0,0 мм</div>
<svg style="left:1128px;top:192px" width="15" height="20" viewBox="0 0 15 20"><rect x="0.5" y="0.5" width="13" height="9" rx="2" fill="#f0efea" stroke="#aaa89e"/><rect x="0.5" y="10.5" width="13" height="9" rx="2" fill="#f0efea" stroke="#aaa89e"/><path d="M3 7 L7 3 L11 7 Z" fill="#444"/><path d="M3 13 L7 17 L11 13 Z" fill="#444"/></svg>
<div class="t" style="left:1040px;top:220px;color:#404060;font-weight:bold;letter-spacing:0.5px">y:</div>
<div class="a" style="left:1054px;top:216px;width:90px;height:22px;background:#fff;border:1px solid #cfccc2"></div>
<div class="t" style="left:1056px;top:220px;">0,0 мм</div>
<svg style="left:1128px;top:217px" width="15" height="20" viewBox="0 0 15 20"><rect x="0.5" y="0.5" width="13" height="9" rx="2" fill="#f0efea" stroke="#aaa89e"/><rect x="0.5" y="10.5" width="13" height="9" rx="2" fill="#f0efea" stroke="#aaa89e"/><path d="M3 7 L7 3 L11 7 Z" fill="#444"/><path d="M3 13 L7 17 L11 13 Z" fill="#444"/></svg>
<svg style="left:1054px;top:246px" width="13" height="13" viewBox="0 0 13 13"><rect x="0.5" y="0.5" width="12" height="12" fill="#f6f5f2" stroke="#6c6a64"/><path d="M2.5 6 L5 9 L10 3" fill="none" stroke="#6c6a64" stroke-width="1.8"/></svg>
<div class="t" style="left:1069px;top:246px;">Относительное положение</div>
<svg style="left:1058px;top:271px" width="38" height="38" viewBox="0 0 38 38"><path d="M3.5 3.5 H33.5 V33.5 H3.5 Z" fill="none" stroke="#8c8ca8" stroke-width="1.2"/><rect x="0.5" y="0.5" width="6" height="6" fill="#fff" stroke="#9c9cb0"/><rect x="0.5" y="15.5" width="6" height="6" fill="#fff" stroke="#9c9cb0"/><rect x="0.5" y="30.5" width="6" height="6" fill="#fff" stroke="#9c9cb0"/><rect x="15.5" y="0.5" width="6" height="6" fill="#fff" stroke="#9c9cb0"/><rect x="15.5" y="15.5" width="6" height="6" fill="#fff" stroke="#9c9cb0"/><rect x="15.5" y="30.5" width="6" height="6" fill="#fff" stroke="#9c9cb0"/><rect x="30.5" y="0.5" width="6" height="6" fill="#fff" stroke="#9c9cb0"/><rect x="30.5" y="15.5" width="6" height="6" fill="#fff" stroke="#9c9cb0"/><rect x="30.5" y="30.5" width="6" height="6" fill="#fff" stroke="#9c9cb0"/><circle cx="18.5" cy="3.5" r="4.5" fill="none" stroke="#8c8a86" stroke-width="1.3"/></svg>
<div class="a" style="left:1006px;top:323px;width:221px;height:1px;background:#d4d1c8"></div>
<div class="t" style="left:1014px;top:336px;">Копии:</div>
<div class="a" style="left:1054px;top:331px;width:90px;height:22px;background:#fff;border:1px solid #cfccc2"></div>
<div class="t" style="left:1056px;top:335px;">1</div>
<svg style="left:1128px;top:332px" width="15" height="20" viewBox="0 0 15 20"><rect x="0.5" y="0.5" width="13" height="9" rx="2" fill="#f0efea" stroke="#aaa89e"/><rect x="0.5" y="10.5" width="13" height="9" rx="2" fill="#f0efea" stroke="#aaa89e"/><path d="M3 7 L7 3 L11 7 Z" fill="#444"/><path d="M3 13 L7 17 L11 13 Z" fill="#444"/></svg>
<div class="a" style="left:1006px;top:361px;width:221px;height:1px;background:#d4d1c8"></div>
<div class="a" style="left:1141px;top:370px;width:87px;height:21px;border:1px solid #8e8c86;border-radius:4px;background:linear-gradient(#fcfcfa,#ecebe6 60%,#dcdad2)"></div>
<div class="t" style="left:1155px;top:375px;">Применить</div>
<svg style="left:1234px;top:135px" width="24" height="136" viewBox="0 0 24 136"><defs><linearGradient id="atg" x1="0" y1="0" x2="1" y2="0"><stop offset="0.15" stop-color="#ECE9E2"/><stop offset="0.9" stop-color="#ffffff"/></linearGradient></defs><path d="M1 0.5 L6 5.5 H20.5 L22.5 7.5 V128 Q22.5 133.5 17 133.5 H1 Z" fill="url(#atg)" stroke="none"/><path d="M1 0.5 L6 5.5 H20.5 L22.5 7.5 V128 Q22.5 133.5 17 133.5 H1" fill="none" stroke="#c8c5bc"/></svg>
<svg style="left:1240px;top:143px" width="17" height="20" viewBox="0 0 17 20"><path d="M8.5 9.2 A4.5 4.5 0 1 0 4 16.4" fill="none" stroke="#4c4c68" stroke-width="1.5"/><path d="M7 11.5 L12 11.5 L9.5 15 Z" fill="#4c4c68"/><path d="M11.5 1.5 V8.5 M8 5 H15" stroke="#4c4c68" stroke-width="1.2"/><path d="M10 2.5 L11.5 0.5 L13 2.5 Z M10 7.5 L11.5 9.5 L13 7.5 Z M9 3.5 L7 5 L9 6.5 Z M14 3.5 L16 5 L14 6.5 Z" fill="#4c4c68"/></svg>
<div class="t" style="left:1204px;top:200px;width:88px;height:13px;text-align:center;transform:rotate(90deg);will-change:auto">Преобразования</div>
<svg style="left:1242px;top:257px" width="10" height="10" viewBox="0 0 10 10"><path d="M1 1 L9 9 M9 1 L1 9" stroke="#6c88c0" stroke-width="1.8"/></svg>
<svg style="left:1234px;top:274px" width="24" height="122" viewBox="0 0 24 122"><path d="M1 0.5 H17 Q22.5 0.5 22.5 6 V116 Q22.5 121.5 17 121.5 H1" fill="none" stroke="#c8c5bc"/></svg>
<svg style="left:1236px;top:278px" width="18" height="18" viewBox="0 0 18 18"><rect x="6.5" y="5.5" width="10" height="12" fill="#c8c8e8" stroke="#5c5c80"/><path d="M8 8 L15 15 M15 8 L8 15 M11.5 6 V17 M7 11.5 H16" stroke="#5c5c80" stroke-width="0.8" stroke-dasharray="1 1"/><path d="M5 1 L9 5 L5 10 L1 6 Z" fill="#fff" stroke="#8c8ca8"/><path d="M2 6.5 L8 6.5 L5 9.5 Z" fill="#f0a000"/></svg>
<div class="t" style="left:1198.0px;top:339.0px;width:93px;height:13px;text-align:center;transform:rotate(90deg);will-change:auto;color:#666">С войства объекта</div>
<svg style="left:1234px;top:395px" width="24" height="80" viewBox="0 0 24 80"><path d="M1 0.5 H17 Q22.5 0.5 22.5 6 V74 Q22.5 79.5 17 79.5 H1" fill="none" stroke="#c8c5bc"/></svg>
<svg style="left:1237px;top:402px" width="17" height="13" viewBox="0 0 17 13"><path d="M2 0.5 L8 3 L14 0.5 L14 12.5 L8 10 L2 12.5 Z" fill="none" stroke="#6c6c98" stroke-width="1"/><rect x="0.5" y="4.5" width="3.5" height="3.5" fill="#fff" stroke="#3c3c58" stroke-width="1.2"/><rect x="12.5" y="4.5" width="3.5" height="3.5" fill="#fff" stroke="#3c3c58" stroke-width="1.2"/><rect x="6.5" y="1.5" width="3.5" height="3.5" fill="#fff" stroke="#3c3c58" stroke-width="1.2"/><rect x="6.5" y="8" width="3.5" height="3.5" fill="#fff" stroke="#3c3c58" stroke-width="1.2"/></svg>
<div class="t" style="left:1219.0px;top:439.0px;width:51px;height:13px;text-align:center;transform:rotate(90deg);will-change:auto;color:#666">Оболочка</div>
<svg style="left:1234px;top:474px" width="24" height="176" viewBox="0 0 24 176"><path d="M1 0.5 H17 Q22.5 0.5 22.5 6 V170 Q22.5 175.5 17 175.5 H1" fill="none" stroke="#c8c5bc"/></svg>
<svg style="left:1237px;top:477px" width="16" height="16" viewBox="0 0 16 16"><path d="M1.5 1 V15" stroke="#2c2c48" stroke-width="1.2" stroke-dasharray="1.2 0.8"/><rect x="2.5" y="3.5" width="12" height="5" fill="#f0f0f4" stroke="#6c6c98"/><rect x="2.5" y="10.5" width="8" height="4" fill="#f0f0f4" stroke="#6c6c98"/></svg>
<div class="t" style="left:1171.0px;top:566.0px;width:147px;height:13px;text-align:center;transform:rotate(90deg);will-change:auto;color:#666">Выровнять и распределить...</div>
<div class="a" style="left:1235px;top:649px;width:1px;height:306px;background:#c8c5bc"></div>
<div class="a" style="left:1259px;top:136px;width:1px;height:819px;background:#c8c5bc"></div>
<div class="a" style="left:1260px;top:113px;width:1px;height:842px;background:#fff"></div>
<svg style="left:1266px;top:117px" width="11" height="2" viewBox="0 0 11 2"><rect x="0" y="0" width="2" height="2" fill="#888"/><rect x="4" y="0" width="2" height="2" fill="#888"/><rect x="8" y="0" width="2" height="2" fill="#888"/></svg>
<svg style="left:1263px;top:123px" width="15" height="15" viewBox="0 0 15 15"><circle cx="7.5" cy="7.5" r="6.5" fill="#fbfbfb" stroke="#b8b8b8"/><path d="M5.5 4.5 L10.5 7.5 L5.5 10.5 Z" fill="#000"/></svg>
<svg style="left:1263px;top:139px" width="16" height="16" viewBox="0 0 16 16"><g transform="translate(0,0) scale(0.95)"><path d="M1.5 14.5 L8 8" stroke="#c8c8c8" stroke-width="2.3" stroke-linecap="round"/><path d="M2.5 13.5 L7.5 8.5" stroke="#e8e8e8" stroke-width="0.7" stroke-dasharray="1 1"/><path d="M9.4 2.3 L13.7 6.6 L11.6 8.7 L7.3 4.4 Z" fill="#bcbcbc"/><path d="M11 5 L13.5 2.5" stroke="#bcbcbc" stroke-width="2.6"/><circle cx="13.8" cy="2.2" r="2.2" fill="#bcbcbc"/></g></svg>
<div class="a" style="left:1262px;top:157px;width:16px;height:16px;background:#f0efea;border:1px solid #dcdad2"></div>
<svg style="left:1265px;top:162px" width="10" height="6" viewBox="0 0 10 6"><path d="M1 5 L5 1 L9 5" fill="none" stroke="#c8c8c4" stroke-width="1.6"/></svg>
<svg style="left:1262px;top:173px" width="16" height="17" viewBox="0 0 16 17"><rect x="0.5" y="0.5" width="15" height="16" fill="#fff" stroke="#000" stroke-width="1.5"/><path d="M1.5 1.5 L14.5 15.5 M14.5 1.5 L1.5 15.5" stroke="#000"/></svg>
<div class="a" style="left:1261px;top:190px;width:18px;height:18px;background:#1c1d1c;border:1px solid #5a5a5a"></div>
<div class="a" style="left:1261px;top:207px;width:18px;height:18px;background:#333333;border:1px solid #5a5a5a"></div>
<div class="a" style="left:1261px;top:224px;width:18px;height:18px;background:#4d4d4d;border:1px solid #5a5a5a"></div>
<div class="a" style="left:1261px;top:241px;width:18px;height:18px;background:#666666;border:1px solid #5a5a5a"></div>
<div class="a" style="left:1261px;top:258px;width:18px;height:18px;background:#808080;border:1px solid #5a5a5a"></div>
<div class="a" style="left:1261px;top:275px;width:18px;height:18px;background:#999999;border:1px solid #5a5a5a"></div>
<div class="a" style="left:1261px;top:292px;width:18px;height:18px;background:#a9aaab;border:1px solid #5a5a5a"></div>
<div class="a" style="left:1261px;top:309px;width:18px;height:18px;background:#c4c5c6;border:1px solid #5a5a5a"></div>
<div class="a" style="left:1261px;top:326px;width:18px;height:18px;background:#dcdcdc;border:1px solid #5a5a5a"></div>
<div class="a" style="left:1261px;top:343px;width:18px;height:18px;background:#ececec;border:1px solid #5a5a5a"></div>
<div class="a" style="left:1261px;top:360px;width:18px;height:18px;background:#ffffff;border:1px solid #5a5a5a"></div>
<div class="a" style="left:1261px;top:377px;width:18px;height:18px;background:#3c2a98;border:1px solid #5a5a5a"></div>
<div class="a" style="left:1261px;top:394px;width:18px;height:18px;background:#10a0d8;border:1px solid #5a5a5a"></div>
<div class="a" style="left:1261px;top:411px;width:18px;height:18px;background:#10a050;border:1px solid #5a5a5a"></div>
<div class="a" style="left:1261px;top:428px;width:18px;height:18px;background:#fde418;border:1px solid #5a5a5a"></div>
<div class="a" style="left:1261px;top:445px;width:18px;height:18px;background:#e02820;border:1px solid #5a5a5a"></div>
<div class="a" style="left:1261px;top:462px;width:18px;height:18px;background:#e0148c;border:1px solid #5a5a5a"></div>
<div class="a" style="left:1261px;top:479px;width:18px;height:18px;background:#a0468c;border:1px solid #5a5a5a"></div>
<div class="a" style="left:1261px;top:496px;width:18px;height:18px;background:#f07a10;border:1px solid #5a5a5a"></div>
<div class="a" style="left:1261px;top:513px;width:18px;height:18px;background:#fcc0c4;border:1px solid #5a5a5a"></div>
<div class="a" style="left:1261px;top:530px;width:18px;height:18px;background:#7c6c62;border:1px solid #5a5a5a"></div>
<div class="a" style="left:1261px;top:547px;width:18px;height:18px;background:#dcdcf4;border:1px solid #5a5a5a"></div>
<div class="a" style="left:1261px;top:564px;width:18px;height:18px;background:#b0a8e0;border:1px solid #5a5a5a"></div>
<div class="a" style="left:1261px;top:581px;width:18px;height:18px;background:#7c9cd4;border:1px solid #5a5a5a"></div>
<div class="a" style="left:1261px;top:598px;width:18px;height:18px;background:#8c7cc8;border:1px solid #5a5a5a"></div>
<div class="a" style="left:1261px;top:615px;width:18px;height:18px;background:#9088b4;border:1px solid #5a5a5a"></div>
<div class="a" style="left:1261px;top:632px;width:18px;height:18px;background:#4c6090;border:1px solid #5a5a5a"></div>
<div class="a" style="left:1261px;top:649px;width:18px;height:18px;background:#585070;border:1px solid #5a5a5a"></div>
<div class="a" style="left:1261px;top:666px;width:18px;height:18px;background:#6c84a0;border:1px solid #5a5a5a"></div>
<div class="a" style="left:1261px;top:683px;width:18px;height:18px;background:#0890d0;border:1px solid #5a5a5a"></div>
<div class="a" style="left:1261px;top:700px;width:18px;height:18px;background:#acd8f0;border:1px solid #5a5a5a"></div>
<div class="a" style="left:1261px;top:717px;width:18px;height:18px;background:#b8c8d8;border:1px solid #5a5a5a"></div>
<div class="a" style="left:1261px;top:734px;width:18px;height:18px;background:#909ca4;border:1px solid #5a5a5a"></div>
<div class="a" style="left:1261px;top:751px;width:18px;height:18px;background:#6c7880;border:1px solid #5a5a5a"></div>
<div class="a" style="left:1261px;top:768px;width:18px;height:18px;background:#3c4850;border:1px solid #5a5a5a"></div>
<div class="a" style="left:1261px;top:785px;width:18px;height:18px;background:#4c6c6c;border:1px solid #5a5a5a"></div>
<div class="a" style="left:1261px;top:802px;width:18px;height:18px;background:#4c887c;border:1px solid #5a5a5a"></div>
<div class="a" style="left:1261px;top:819px;width:18px;height:18px;background:#6c9494;border:1px solid #5a5a5a"></div>
<div class="a" style="left:1261px;top:836px;width:18px;height:18px;background:#5caca0;border:1px solid #5a5a5a"></div>
<div class="a" style="left:1261px;top:853px;width:18px;height:18px;background:#6ca47c;border:1px solid #5a5a5a"></div>
<div class="a" style="left:1261px;top:870px;width:18px;height:18px;background:#7cd4dc;border:1px solid #5a5a5a"></div>
<div class="a" style="left:1261px;top:887px;width:18px;height:18px;background:#5caab4;border:1px solid #5a5a5a"></div>
<div class="a" style="left:1262px;top:905px;width:16px;height:16px;background:#f0efea;border:1px solid #dcdad2"></div>
<svg style="left:1265px;top:911px" width="10" height="6" viewBox="0 0 10 6"><path d="M1 1 L5 5 L9 1" fill="none" stroke="#444" stroke-width="2"/></svg>
<svg style="left:1266px;top:926px" width="8" height="10" viewBox="0 0 8 10"><rect x="0" y="0" width="1.5" height="10" fill="#000"/><path d="M7.5 0 L2 5 L7.5 10 Z" fill="#000"/></svg>
<div class="a" style="left:0px;top:954px;width:1280px;height:1px;background:#c8c5bc"></div>
<div class="a" style="left:0px;top:955px;width:1280px;height:1px;background:#fff"></div>
<div class="t" style="left:4px;top:960px;">( 120,370; 217,311 )</div>
<svg style="left:118px;top:961px" width="6" height="10" viewBox="0 0 6 10"><path d="M0 0 L5.5 5 L0 10 Z" fill="#000"/></svg>
<div class="t" style="left:4px;top:981px;letter-spacing:-0.09px">Цветовые профили документа: RGB: sRGB IEC61966-2.1; CMYK: ISO Coated v2 (ECI); Оттенки серого: Dot Gain 15%</div>
<svg style="left:598px;top:982px" width="6" height="10" viewBox="0 0 6 10"><path d="M0 0 L5.5 5 L0 10 Z" fill="#000"/></svg>
<svg style="left:963px;top:960px" width="15" height="14" viewBox="0 0 15 14"><rect x="0.5" y="0.5" width="14" height="11" rx="1" fill="#90b0e0" stroke="#6c6c98"/><rect x="1" y="1" width="13" height="3.5" fill="#d89898"/><rect x="1" y="4.5" width="13" height="3" fill="#68a868"/><rect x="5.5" y="3.5" width="4" height="4" fill="#fff" stroke="#505050"/><path d="M3 13.5 H12" stroke="#6c6c98"/></svg>
<div class="a" style="left:1032px;top:958px;width:1px;height:15px;background:#c8c5bc"></div>
<svg style="left:1036px;top:960px" width="16" height="16" viewBox="0 0 16 16"><path d="M7 2 L13 8 L7.5 14.5 L1.5 8.5 Z" fill="#fff" stroke="#4c4c70" stroke-width="1.2"/><path d="M2 9 L12.5 9 L7.5 14 Z" fill="#f08000"/><path d="M5 1 L8 1.5 L9 0" stroke="#4c4c70" stroke-width="0.8" fill="none"/><path d="M12 7 L14.5 8 L14.5 12" fill="none" stroke="#f08000" stroke-width="1.4"/><circle cx="9" cy="7" r="1" fill="#4c4c70"/><path d="M9 7 L9 2" stroke="#4c4c70"/></svg>
<svg style="left:1058px;top:958px" width="18" height="18" viewBox="0 0 18 18"><rect x="0.75" y="0.75" width="16.5" height="16.5" fill="#fff" stroke="#6c6c6c" stroke-width="1.5"/><path d="M1 1 L17 17 M17 1 L1 17" stroke="#000"/></svg>
<div class="t" style="left:1078px;top:961px;">Нет</div>
<svg style="left:1040px;top:981px" width="10" height="16" viewBox="0 0 10 16"><path d="M5 0.5 L8 5 Q9 8 7.5 11.5 H2.5 Q1 8 2 5 Z" fill="#f0f0f8" stroke="#5c5c80"/><path d="M5 4 V8" stroke="#5c5c80"/><rect x="0.5" y="12.5" width="9" height="2" fill="#2c2c48"/></svg>
<svg style="left:1058px;top:979px" width="18" height="18" viewBox="0 0 18 18"><rect x="0.75" y="0.75" width="16.5" height="16.5" fill="#fff" stroke="#6c6c6c" stroke-width="1.5"/><path d="M1 1 L17 17 M17 1 L1 17" stroke="#000"/></svg>
<div class="t" style="left:1078px;top:982px;">Цвет абриса</div>
<svg style="left:1255px;top:962px" width="18" height="19" viewBox="0 0 18 19"><rect x="0.5" y="0.5" width="16" height="16" fill="#fff" stroke="#c8c8c8"/><circle cx="8.5" cy="6" r="3.3" fill="#e05020"/><path d="M2 16 Q2 10 8.5 10 Q15 10 15 16 Z" fill="#e05020"/><path d="M14 18.5 L18 14.5 V18.5 Z" fill="#000"/></svg>
<div class="a" style="left:0px;top:1000px;width:1280px;height:1px;background:#3c4c6c"></div>
<div class="a" style="left:0px;top:1001px;width:1280px;height:1px;background:#b8c8e8"></div>
<div class="a" style="left:0px;top:1002px;width:1280px;height:2px;background:#94a8c8"></div>
<div class="a" style="left:477px;top:1002px;width:94px;height:2px;background:#4c5c7c;border-radius:3px 3px 0 0"></div>
<div class="a" style="left:1120px;top:1002px;width:156px;height:2px;background:#4c5c7c;border-radius:3px 3px 0 0"></div></body></html>
